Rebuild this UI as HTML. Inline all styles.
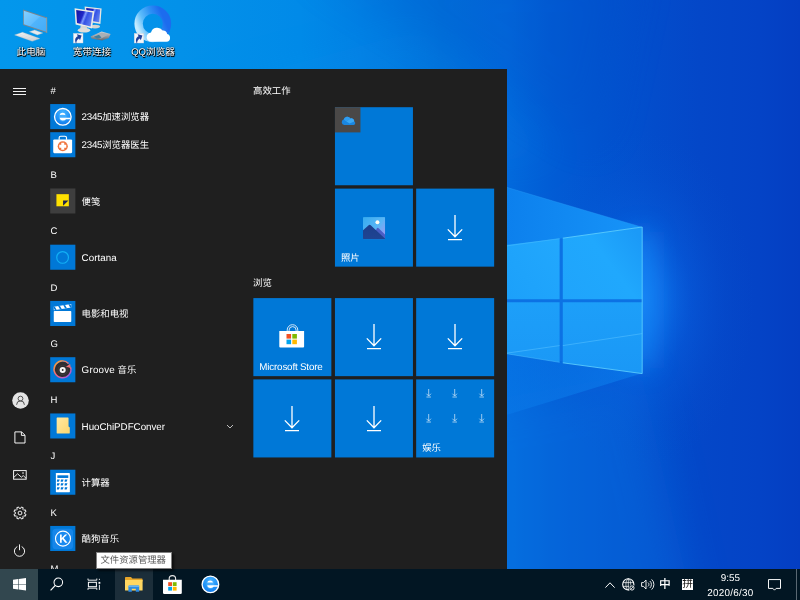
<!DOCTYPE html>
<html lang="zh-CN">
<head>
<meta charset="utf-8">
<title>桌面</title>
<style>
html,body{margin:0;padding:0;width:800px;height:600px;overflow:hidden;background:#0a5fd0;}
body{position:relative;text-rendering:geometricPrecision;font-family:"Liberation Sans","Noto Sans CJK SC",sans-serif;font-size:9.4px;color:#fff;}
.abs{position:absolute;}
#start,#taskbar,.dicon,#tip{will-change:transform;}
#wall{position:absolute;left:0;top:0;width:800px;height:600px;}
#start{position:absolute;left:0;top:69px;width:507px;height:500px;background:#1f1f1f;overflow:hidden;}
#taskbar{position:absolute;left:0;top:569px;width:800px;height:31px;background:#021623;overflow:hidden;}
.tile{position:absolute;width:78.2px;height:78.2px;}
.tlabel{position:absolute;left:6px;bottom:4.2px;font-size:9.4px;line-height:11px;white-space:nowrap;}
.hdr{position:absolute;left:50.6px;height:12px;margin-top:-6px;font-size:9.5px;line-height:12px;white-space:nowrap;color:#fff;}
.app{position:absolute;left:81.6px;height:12px;margin-top:-6px;font-size:9.4px;line-height:12px;white-space:nowrap;color:#fff;}
.ico{position:absolute;left:50.2px;width:25.2px;height:25px;}
.ico svg{position:absolute;left:0;top:0;width:100%;height:100%;display:block;}
.grp{position:absolute;left:253px;height:12px;margin-top:-6px;font-size:9.4px;line-height:12px;white-space:nowrap;}
.lt{position:relative;top:0px;font-size:9.8px;line-height:1px;}
.rail{position:absolute;left:9.75px;width:20px;height:20px;margin-top:-10px;}
.rail svg,.tb svg{display:block;width:100%;height:100%;}
.tb{position:absolute;}
.dicon{position:absolute;text-align:center;white-space:nowrap;font-size:9.6px;line-height:11px;color:#fff;text-shadow:0.7px 0.7px 0.8px #000,0 0 1.6px #000,0.4px 0.6px 0.4px #000;}
.dsvg{position:absolute;}
svg{overflow:visible;}
</style>
</head>
<body>

<svg id="wall" viewBox="0 0 800 600">
<defs>
<linearGradient id="wbase" x1="0" y1="0" x2="800" y2="0" gradientUnits="userSpaceOnUse">
<stop offset="0" stop-color="#0397ec"/>
<stop offset="0.225" stop-color="#0391e9"/>
<stop offset="0.375" stop-color="#018ae8"/>
<stop offset="0.45" stop-color="#0280e4"/>
<stop offset="0.55" stop-color="#0171db"/>
<stop offset="0.634" stop-color="#0369dc"/>
<stop offset="0.69" stop-color="#025cd5"/>
<stop offset="0.75" stop-color="#0254d0"/>
<stop offset="0.82" stop-color="#034ccb"/>
<stop offset="0.875" stop-color="#0447c8"/>
<stop offset="0.95" stop-color="#0443c6"/>
<stop offset="1" stop-color="#043ec2"/>
</linearGradient>
<radialGradient id="wglow" cx="640" cy="300" r="100" gradientUnits="userSpaceOnUse" gradientTransform="translate(640 300) scale(1.15 1.7) translate(-640 -300)">
<stop offset="0" stop-color="#1a90ff" stop-opacity="0.8"/>
<stop offset="0.2" stop-color="#1486fc" stop-opacity="0.62"/>
<stop offset="0.45" stop-color="#0c70ee" stop-opacity="0.32"/>
<stop offset="0.75" stop-color="#0a62de" stop-opacity="0.1"/>
<stop offset="1" stop-color="#0a5ad0" stop-opacity="0"/>
</radialGradient>
<linearGradient id="wpaneR" x1="562" y1="300" x2="642" y2="240" gradientUnits="userSpaceOnUse">
<stop offset="0" stop-color="#1fa4fb"/>
<stop offset="0.6" stop-color="#20a8fd"/>
<stop offset="1" stop-color="#1b9af7"/>
</linearGradient>
<linearGradient id="wpaneL" x1="480" y1="300" x2="560" y2="240" gradientUnits="userSpaceOnUse">
<stop offset="0" stop-color="#1a9ef9"/>
<stop offset="1" stop-color="#22a8fd"/>
</linearGradient>
<linearGradient id="wpaneR2" x1="0" y1="302" x2="0" y2="372" gradientUnits="userSpaceOnUse">
<stop offset="0" stop-color="#1d9ff9"/>
<stop offset="1" stop-color="#1a98f6"/>
</linearGradient>
<linearGradient id="wbeamT" x1="480" y1="0" x2="642" y2="0" gradientUnits="userSpaceOnUse">
<stop offset="0" stop-color="#0a7ceb"/>
<stop offset="1" stop-color="#1794f8"/>
</linearGradient>
<linearGradient id="wbeamB" x1="480" y1="0" x2="642" y2="0" gradientUnits="userSpaceOnUse">
<stop offset="0" stop-color="#0878e8"/>
<stop offset="1" stop-color="#0f86f2"/>
</linearGradient>
<filter id="wblur2" x="-300%" y="-50%" width="700%" height="200%"><feGaussianBlur stdDeviation="13"/></filter>
<filter id="wblur3" x="-30%" y="-30%" width="160%" height="160%"><feGaussianBlur stdDeviation="22"/></filter>
<filter id="wblur" x="-20%" y="-20%" width="140%" height="140%"><feGaussianBlur stdDeviation="10"/></filter>
</defs>
<rect width="800" height="600" fill="url(#wbase)"/>
<!-- soft light wedges -->
<polygon points="300,-40 640,-40 600,150" fill="#0048c0" opacity="0.16" filter="url(#wblur3)"/>
<polygon points="200,90 420,30 560,160 200,160" fill="#109cf0" opacity="0.10" filter="url(#wblur3)"/>
<polygon points="641,373 700,640 380,640 380,420" fill="#0a80ea" opacity="0.28" filter="url(#wblur3)"/>
<rect width="800" height="600" fill="url(#wglow)" opacity="0.85"/>
<rect x="630" y="232" width="22" height="136" fill="#1e96ff" opacity="0.6" filter="url(#wblur2)"/>
<!-- beams -->
<polygon points="641.5,227 480,179.5 480,252" fill="url(#wbeamT)"/>
<polygon points="641.5,373.6 480,423 480,350" fill="url(#wbeamB)" opacity="0.5"/>
<line x1="641.5" y1="227" x2="480" y2="179.5" stroke="#2aa0f8" stroke-width="0.6" opacity="0.6"/>
<!-- cross bars -->
<polygon points="480,250 642.2,227 642.2,373.6 480,350" fill="#0c72e4"/>
<!-- logo panes -->
<polygon points="562.8,238.2 642.2,227 642.2,299.2 562.8,299.2" fill="url(#wpaneR)"/>
<polygon points="480,248 559.6,238.6 559.6,299.2 480,299.2" fill="url(#wpaneL)"/>
<polygon points="562.8,302.2 642.2,302.2 642.2,373.6 562.8,362.8" fill="url(#wpaneR2)"/>
<polygon points="480,302.2 559.6,302.2 559.6,362.3 480,349.4" fill="url(#wpaneR2)"/>
<path d="M562.8 345.6 L642.2 333.6 M480 357 L559.6 345.6" stroke="#4fbcff" stroke-width="0.9" opacity="0.7"/>
<polyline points="562.8,238.2 642.2,227 642.2,373.6 562.8,362.8" fill="none" stroke="#62d4ff" stroke-width="0.9" opacity="0.9"/>
<path d="M480 249.6 L559.6 238.6 M480 349.4 L559.6 362.3" stroke="#4fc0ff" stroke-width="0.7" opacity="0.7"/>
</svg>

<!-- DESKTOP ICONS -->
<svg class="dsvg" style="left:12px;top:6px;width:40px;height:38px" viewBox="12 6 40 38">
<defs><linearGradient id="gpc" x1="0" y1="0" x2="1" y2="1"><stop offset="0" stop-color="#86d0ff"/><stop offset="0.48" stop-color="#62beff"/><stop offset="0.52" stop-color="#50b4fb"/><stop offset="1" stop-color="#43acf8"/></linearGradient>
<linearGradient id="gkb" x1="0" y1="0" x2="0.3" y2="1"><stop offset="0" stop-color="#fafafa"/><stop offset="1" stop-color="#cfd4d9"/></linearGradient></defs>
<path d="M29.4 31.7 L34.6 30 L42.8 33 L37.4 34.9 Z" fill="#e6e9ec" stroke="#b4bac0" stroke-width="0.35"/>
<path d="M23.1 9.5 L47.100 17.500 V32.900 L23.100 24.900 Z" fill="#7d848b"/>
<path d="M46.300 17.800 L47.100 17.500 V32.900 L46.300 32.300 Z" fill="#a89f94"/>
<path d="M23.800 10.700 L46.300 18.200 V31.700 L23.800 24.200 Z" fill="url(#gpc)"/>
<path d="M14.600 34.900 L22.500 32.300 L39.800 38.600 L32.200 41.300 Z" fill="url(#gkb)" stroke="#b4bac0" stroke-width="0.35"/>
<path d="M17.2 34.900 L33.400 40.800 M19.800 34 L36 39.900 M22.400 33.200 L38.400 39" stroke="#c2c7cc" stroke-width="0.3" fill="none"/>
</svg>
<div class="dicon" style="left:1px;top:47.3px;width:60px">此电脑</div>
<svg class="dsvg" style="left:72px;top:5px;width:40px;height:40px" viewBox="72 5 40 40">
<defs><linearGradient id="gmon" x1="0" y1="0.2" x2="1" y2="0.6"><stop offset="0" stop-color="#1516a4"/><stop offset="0.38" stop-color="#2029c8"/><stop offset="0.5" stop-color="#7f9cff"/><stop offset="0.62" stop-color="#3552e4"/><stop offset="1" stop-color="#5f80f2"/></linearGradient>
<linearGradient id="gmdm" x1="0" y1="0" x2="0" y2="1"><stop offset="0" stop-color="#d4d8dc"/><stop offset="1" stop-color="#5e666e"/></linearGradient></defs>
<path d="M84.6 6.6 L101.6 8.6 L100.4 24 L86 21.6 Z" fill="#e6e6e2"/>
<path d="M86.2 8 L100.2 9.6 L99.2 22.2 L87.2 20.2 Z" fill="url(#gmon)"/>
<ellipse cx="95" cy="26.6" rx="5" ry="1.8" fill="#d4d4d0"/>
<path d="M74.6 8.2 L94.4 11.2 L92 28.6 L75.6 24.4 Z" fill="#ecece8"/>
<path d="M76.2 10 L92.6 12.6 L90.6 26.4 L77 23 Z" fill="url(#gmon)"/>
<path d="M80.6 26 h6 l0.6 3 h-7 z" fill="#d8d8d4"/>
<ellipse cx="84" cy="30.2" rx="6.2" ry="2.4" fill="#dededa"/>
<path d="M90.6 36.6 L101.6 31.4 L110.6 34 L108.8 38 L102 40.6 L91.6 38.6 Z" fill="url(#gmdm)"/>
<path d="M92.4 36.4 L101.6 32.4 L108.6 34.6 L101 38.6 Z" fill="#a9b0b6"/>
<path d="M93.6 36.8 L99 34.8 L101.6 37.8 L97 38.4 Z" fill="#3f7f9e"/>
<rect x="73.4" y="33.4" width="9.6" height="9.6" fill="#f4f6fa" stroke="#c8ccd4" stroke-width="0.4"/>
<path d="M75.6 41.6 c0 -3.4 1.4 -4.8 3.8 -4.8 v-1.6 l2.8 2.6 l-2.8 2.6 v-1.6 c-1.8 0 -3 0.8 -3.8 2.8 z" fill="#1f3f9a" transform="translate(78.2 38.3) rotate(-28) scale(1.3) translate(-78.9 -38.4)"/>
</svg>
<div class="dicon" style="left:62px;top:47.3px;width:60px">宽带连接</div>
<svg class="dsvg" style="left:132px;top:4px;width:42px;height:42px" viewBox="132 4 42 42">
<defs><linearGradient id="gqq" x1="0.05" y1="0.85" x2="0.95" y2="0.45"><stop offset="0" stop-color="#c4ebff"/><stop offset="0.3" stop-color="#5cbcfb"/><stop offset="0.65" stop-color="#2d92f5"/><stop offset="1" stop-color="#1c6cee"/></linearGradient></defs>
<circle cx="152.8" cy="23.8" r="14.2" fill="none" stroke="url(#gqq)" stroke-width="8.4"/>
<path d="M151.4 41.8 a4.6 4.6 0 0 1 -0.4 -9.2 a6.4 6.4 0 0 1 11.6 -2 a4 4 0 0 1 4.600 3.4 a4 4 0 0 1 -0.600 7.8 z" fill="#fff"/>
<rect x="134.200" y="33.400" width="9.600" height="9.600" fill="#f4f6fa" stroke="#c8ccd4" stroke-width="0.4"/>
<path d="M136.4 41.6 c0 -3.4 1.4 -4.8 3.8 -4.8 v-1.6 l2.8 2.6 l-2.8 2.6 v-1.6 c-1.8 0 -3 0.8 -3.8 2.8 z" fill="#1f3f9a" transform="translate(139 38.3) rotate(-28) scale(1.3) translate(-139.7 -38.4)"/>
</svg>
<div class="dicon" style="left:123px;top:47.3px;width:60px">QQ浏览器</div>
<!-- START MENU -->
<div id="start">
<svg class="abs" style="left:0;top:0;width:507px;height:500px" viewBox="0 0 507 500"><rect x="50.2" y="35.07" width="25.15" height="25.05" fill="#0078d7"/><rect x="50.2" y="63.20" width="25.15" height="25.05" fill="#0078d7"/><rect x="50.2" y="119.45" width="25.15" height="25.05" fill="#3e3e3e"/><rect x="50.2" y="175.70" width="25.15" height="25.05" fill="#0078d7"/><rect x="50.2" y="231.95" width="25.15" height="25.05" fill="#0078d7"/><rect x="50.2" y="288.20" width="25.15" height="25.05" fill="#0078d7"/><rect x="50.2" y="344.45" width="25.15" height="25.05" fill="#0078d7"/><rect x="50.2" y="400.70" width="25.15" height="25.05" fill="#0078d7"/><rect x="50.2" y="456.95" width="25.15" height="25.05" fill="#0078d7"/><rect x="334.95" y="38.20" width="78.0" height="78.05" fill="#0078d7"/><rect x="334.95" y="38.20" width="25.5" height="25.2" fill="#4a4847"/><rect x="334.95" y="119.60" width="78.0" height="78.05" fill="#0078d7"/><rect x="416.15" y="119.60" width="78.0" height="78.05" fill="#0078d7"/><rect x="253.35" y="229.10" width="78.0" height="78.05" fill="#0078d7"/><rect x="334.95" y="229.10" width="78.0" height="78.05" fill="#0078d7"/><rect x="416.15" y="229.10" width="78.0" height="78.05" fill="#0078d7"/><rect x="253.35" y="310.40" width="78.0" height="78.05" fill="#0078d7"/><rect x="334.95" y="310.40" width="78.0" height="78.05" fill="#0078d7"/><rect x="416.15" y="310.40" width="78.0" height="78.05" fill="#0078d7"/></svg>
<div class="hdr" style="top:23px">#</div>
<div class="ico" style="top:34.97px"><svg viewBox="0 0 32 32"><defs><radialGradient id="g2345" cx="0.5" cy="0.25" r="0.85"><stop offset="0" stop-color="#46b2ff"/><stop offset="0.55" stop-color="#1f92f7"/><stop offset="1" stop-color="#0f72e6"/></radialGradient></defs>
<circle cx="16.3" cy="16.400" r="10.600" fill="url(#g2345)" stroke="#fff" stroke-width="1.7"/>
<ellipse cx="16.2" cy="16.600" rx="5" ry="5.800" fill="#52b4ff" opacity="0.55"/>
<path d="M12.300 14.100 Q12.800 11.300 16 11.300 Q19.200 11.300 19.700 14.100 Q16 13.700 12.300 14.100 Z" fill="#fff"/>
<path d="M12.300 17.500 H25.900 V19.400 H20.400 Q19 21 16 21 Q12.800 21 12.300 17.500 Z" fill="#fff"/></svg></div>
<div class="app" style="top:48px"><span class="lt" style="letter-spacing:-0.3px">2345</span>加速浏览器</div>
<div class="ico" style="top:63.10px"><svg viewBox="0 0 32 32"><path d="M11.6 10 v-2.6 a2 2 0 0 1 2 -2 h5.4 a2 2 0 0 1 2 2 v2.6" fill="none" stroke="#fff" stroke-width="1.5"/>
<rect x="4" y="9.5" width="24.2" height="17.6" rx="1.4" fill="#fff"/>
<circle cx="16.2" cy="18.2" r="6.5" fill="#f0733c"/>
<path d="M14.3 13.7 h3.8 v2.6 h2.6 v3.8 h-2.6 v2.6 h-3.8 v-2.6 h-2.6 v-3.8 h2.6 z" fill="#fff"/></svg></div>
<div class="app" style="top:76px"><span class="lt" style="letter-spacing:-0.3px">2345</span>浏览器医生</div>
<div class="hdr" style="top:107px">B</div>
<div class="ico" style="top:119.35px"><svg viewBox="0 0 32 32"><rect x="8.1" y="7.9" width="15.9" height="15.5" fill="#ffe100"/><path d="M16.6 16 h6.9 l-6.9 6.8 z" fill="#1c2452"/></svg></div>
<div class="app" style="top:133px">便笺</div>
<div class="hdr" style="top:163px">C</div>
<div class="ico" style="top:175.60px"><svg viewBox="0 0 32 32"><circle cx="16" cy="15.9" r="7.5" fill="none" stroke="#12b0f5" stroke-width="1.5"/></svg></div>
<div class="app" style="top:189px"><span class="lt" style="letter-spacing:0.03px">Cortana</span></div>
<div class="hdr" style="top:220px">D</div>
<div class="ico" style="top:231.85px"><svg viewBox="0 -0.5 32 32"><defs><clipPath id="cmov"><path d="M4.7 6.7 L27.1 3.3 V7.9 L4.7 11.2 Z"/></clipPath></defs>
<path d="M4.7 6.7 L27.1 3.3 V7.9 L4.7 11.2 Z" fill="#fff"/>
<g clip-path="url(#cmov)" fill="#0078d7"><path d="M2.600 5 h2.400 l4.400 7.600 h-2.400 z M9.200 4 h2.400 l4.400 7.600 h-2.400 z M15.800 3 h2.400 l4.400 7.600 h-2.400 z M22.400 2 h2.400 l4.400 7.600 h-2.400 z"/></g>
<rect x="4.700" y="12.300" width="22.400" height="14.200" rx="1" fill="#fff"/></svg></div>
<div class="app" style="top:245px">电影和电视</div>
<div class="hdr" style="top:276px">G</div>
<div class="ico" style="top:288.10px"><svg viewBox="0 0 32 32"><defs><linearGradient id="ggrv" x1="0.15" y1="0.1" x2="0.85" y2="0.95"><stop offset="0" stop-color="#ff9838"/><stop offset="0.5" stop-color="#ee6680"/><stop offset="1" stop-color="#a45ae0"/></linearGradient></defs>
<circle cx="16.1" cy="16.6" r="10.4" fill="#2f2d30"/>
<path d="M23.600 8.200 A10.800 10.800 0 1 0 26.400 13.200" fill="none" stroke="url(#ggrv)" stroke-width="1.9"/>
<path d="M20.200 12.600 L25.600 8.800 L26.800 15.200 L24.400 13.400 Z" fill="#ee6e78"/>
<circle cx="16.1" cy="16.600" r="6" fill="none" stroke="#3d3b3e" stroke-width="1.200"/>
<circle cx="16.1" cy="16.600" r="3.900" fill="#f6f6f6"/><circle cx="16.1" cy="16.600" r="1.200" fill="#2f2d30"/></svg></div>
<div class="app" style="top:301px"><span class="lt" style="letter-spacing:0.2px">Groove</span> 音乐</div>
<div class="hdr" style="top:332px">H</div>
<div class="ico" style="top:344.35px"><svg viewBox="0 0 32 32"><defs><linearGradient id="gfld" x1="0" y1="0" x2="1" y2="1"><stop offset="0" stop-color="#ffe9a2"/><stop offset="1" stop-color="#fbd66e"/></linearGradient></defs>
<path d="M9 5.800 h14 a0.600 0.600 0 0 1 0.600 0.600 v10.800 l1.600 1.300 v7.200 a0.600 0.600 0 0 1 -0.600 0.600 h-15.600 a0.600 0.600 0 0 1 -0.600 -0.600 v-19.300 a0.600 0.600 0 0 1 0.600 -0.600 z" fill="url(#gfld)"/></svg></div>
<div class="app" style="top:358px"><span class="lt" style="letter-spacing:-0.03px">HuoChiPDFConver</span></div>
<div class="hdr" style="top:388px">J</div>
<div class="ico" style="top:400.60px"><svg viewBox="0 0 32 32"><rect x="7.400" y="3.900" width="17.900" height="24.600" rx="0.600" fill="#fff"/><rect x="9.300" y="6.800" width="14" height="3.400" fill="#0078d7"/><path d="M9.0 12.2 h3.4 l-1.200 2.800 h-2.600 z" fill="#0078d7"/><path d="M9.0 17.1 h3.4 l-1.200 2.800 h-2.600 z" fill="#0078d7"/><path d="M9.0 22.1 h3.4 l-1.200 2.800 h-2.600 z" fill="#0078d7"/><path d="M13.9 12.2 h3.4 l-1.200 2.800 h-2.600 z" fill="#0078d7"/><path d="M13.9 17.1 h3.4 l-1.200 2.800 h-2.600 z" fill="#0078d7"/><path d="M13.9 22.1 h3.4 l-1.200 2.800 h-2.600 z" fill="#0078d7"/><path d="M18.9 12.2 h3.4 l-1.200 2.800 h-2.600 z" fill="#0078d7"/><path d="M18.9 17.1 h3.4 l-1.200 2.800 h-2.600 z" fill="#0078d7"/><path d="M18.9 22.1 h3.4 l-1.200 2.800 h-2.600 z" fill="#0078d7"/></svg></div>
<div class="app" style="top:414px">计算器</div>
<div class="hdr" style="top:445px">K</div>
<div class="ico" style="top:456.85px"><svg viewBox="0 0 32 32"><rect x="3" y="3.400" width="26.400" height="26.400" rx="4.500" fill="#1686ea"/><circle cx="16.5" cy="16.2" r="9.6" fill="#1a8af0" stroke="#fff" stroke-width="1.4"/>
<path d="M12.700 11 h2.200 v4.200 l4.200 -4.200 h2.900 l-4.600 4.500 l4.900 5.900 h-2.900 l-3.600 -4.400 l-0.900 0.900 v3.500 h-2.200 z" fill="#fff"/></svg></div>
<div class="app" style="top:470px">酷狗音乐</div>
<div class="hdr" style="top:501px">M</div>
<svg class="abs" style="left:225.5px;top:355.00px;width:8px;height:5px" viewBox="0 0 8 5"><path d="M1 1 L4 4 L7 1" fill="none" stroke="#d0d0d0" stroke-width="0.9"/></svg>
<div class="abs" style="left:13.4px;top:19.00px;width:12.8px;height:1px;background:#f2f2f2"></div>
<div class="abs" style="left:13.4px;top:22.00px;width:12.8px;height:1px;background:#f2f2f2"></div>
<div class="abs" style="left:13.4px;top:25.00px;width:12.8px;height:1px;background:#f2f2f2"></div>
<svg class="abs" style="left:11.6px;top:322.80px;width:17px;height:17px" viewBox="0 0 17 17"><circle cx="8.5" cy="8.5" r="8.3" fill="#e4e4e4"/><circle cx="8.5" cy="6.6" r="2.4" fill="none" stroke="#444" stroke-width="0.9"/><path d="M4.6 12.8 a3.9 3.9 0 0 1 7.8 0" fill="none" stroke="#444" stroke-width="0.9"/></svg>
<svg class="abs" style="left:13.6px;top:362.20px;width:12px;height:13px" viewBox="0 0 12 13"><path d="M0.9 0.9 H7.6 L11 4.2 V12 H0.9 Z M7.4 1 V4.4 H10.9" fill="none" stroke="#fff" stroke-width="0.95"/></svg>
<svg class="abs" style="left:13px;top:401.40px;width:14px;height:10px" viewBox="0 0 14 10"><rect x="0.6" y="0.6" width="12.6" height="8.6" fill="none" stroke="#fff" stroke-width="0.95"/><path d="M0.8 7.4 L4.6 3.8 L8.4 7.2 L10.2 5.6 L13 8.2" fill="none" stroke="#fff" stroke-width="0.9"/><circle cx="10" cy="3" r="0.8" fill="#fff"/></svg>
<svg class="abs" style="left:12.8px;top:436.80px;width:14px;height:14px" viewBox="0 0 14 14"><path d="M13.03 8.45 L12.29 10.24 L10.80 9.76 L9.76 10.80 L10.24 12.29 L8.45 13.03 L7.74 11.64 L6.26 11.64 L5.55 13.03 L3.76 12.29 L4.24 10.80 L3.20 9.76 L1.71 10.24 L0.97 8.45 L2.36 7.74 L2.36 6.26 L0.97 5.55 L1.71 3.76 L3.20 4.24 L4.24 3.20 L3.76 1.71 L5.55 0.97 L6.26 2.36 L7.74 2.36 L8.45 0.97 L10.24 1.71 L9.76 3.20 L10.80 4.24 L12.29 3.76 L13.03 5.55 L11.64 6.26 L11.64 7.74 Z" fill="none" stroke="#fff" stroke-width="0.95" stroke-linejoin="round"/><circle cx="7" cy="7" r="1.9" fill="none" stroke="#fff" stroke-width="0.9"/></svg>
<svg class="abs" style="left:13.3px;top:475.20px;width:13px;height:13px" viewBox="0 0 13 13"><path d="M4.3 2.6 A5.1 5.1 0 1 0 8.7 2.6" fill="none" stroke="#fff" stroke-width="0.95"/><path d="M6.5 0.4 V6.2" stroke="#fff" stroke-width="0.95"/></svg>
<div class="grp" style="top:22.40px">高效工作</div>
<div class="grp" style="top:214.20px">浏览</div>
<div class="tile" style="left:334.95px;top:38.20px"><svg class="abs" style="left:6.1px;top:9.1px;width:14px;height:9.2px" viewBox="0 0 26 17"><path d="M6 16.5 a5 5 0 0 1 -1 -9.8 a7 7 0 0 1 12.6 -2.2 a5.6 5.6 0 0 1 7 5.6 a3.4 3.4 0 0 1 -1 6.4 z" fill="#1a86e0"/><path d="M5 6.7 a7 7 0 0 1 12.6 -2.2 l-7.6 5.5 z" fill="#2f9cf0"/><path d="M10 10 l7.6 -5.5 a5.6 5.6 0 0 1 7 5.6 l-8.6 4 z" fill="#3aa8f5"/></svg></div>
<div class="tile" style="left:334.95px;top:119.60px"><svg class="abs" style="left:28px;top:28.3px;width:22.2px;height:22.4px" viewBox="0 0 24 24"><defs><linearGradient id="gph" x1="0" y1="0" x2="1" y2="0.8"><stop offset="0" stop-color="#36acf0"/><stop offset="0.6" stop-color="#58b6f6"/><stop offset="1" stop-color="#9c98f2"/></linearGradient><linearGradient id="gph2" x1="0" y1="0" x2="0" y2="1"><stop offset="0" stop-color="#1c3f8c"/><stop offset="1" stop-color="#1f4492"/></linearGradient><clipPath id="cph"><rect x="0" y="0" width="24" height="24" rx="0.8"/></clipPath></defs><g clip-path="url(#cph)"><rect width="24" height="24" fill="url(#gph)"/><path d="M11 24 L14.600 12.600 Q15.800 10.800 17.200 12.200 L24 19 V24 Z" fill="#4a5ec6"/><path d="M0 14.200 L5.800 9 Q7.200 7.800 8.600 9 L24 23.400 V24 H0 Z" fill="url(#gph2)"/><circle cx="15.6" cy="5.600" r="2.100" fill="#fffdf2"/></g></svg><div class="tlabel">照片</div></div>
<div class="tile" style="left:416.15px;top:119.60px"><svg class="abs" style="left:30.6px;top:26.3px;width:16px;height:26px" viewBox="0 0 16 26"><path d="M8 0 V21.6 M0.8 14.4 L8 21.8 L15.2 14.4 M1 24.6 H15" fill="none" stroke="#fff" stroke-width="1.3"/></svg></div>
<div class="tile" style="left:253.35px;top:229.10px"><svg class="abs" style="left:0;top:0;width:78px;height:78px" viewBox="0 0 78 78"><path d="M34.200 33.400 v-1.400 a5.300 5.300 0 0 1 10.600 0 v1.400 M36.100 33.400 v-1.300 a3.500 3.500 0 0 1 7 0 v1.300" fill="none" stroke="#e8f2fb" stroke-width="0.9"/><path d="M26.300 32.900 h24.800 v15.700 a1 1 0 0 1 -1 1 h-22.800 a1 1 0 0 1 -1 -1 z" fill="#fff"/><rect x="33.500" y="36" width="4.600" height="4.600" fill="#f25022"/><rect x="39.300" y="36" width="4.600" height="4.600" fill="#7fba00"/><rect x="33.500" y="41.600" width="4.600" height="4.600" fill="#00a4ef"/><rect x="39.300" y="41.600" width="4.600" height="4.600" fill="#ffb900"/></svg><div class="tlabel"><span class="lt" style="letter-spacing:-0.18px">Microsoft Store</span></div></div>
<div class="tile" style="left:334.95px;top:229.10px"><svg class="abs" style="left:30.6px;top:26.3px;width:16px;height:26px" viewBox="0 0 16 26"><path d="M8 0 V21.6 M0.8 14.4 L8 21.8 L15.2 14.4 M1 24.6 H15" fill="none" stroke="#fff" stroke-width="1.3"/></svg></div>
<div class="tile" style="left:416.15px;top:229.10px"><svg class="abs" style="left:30.6px;top:26.3px;width:16px;height:26px" viewBox="0 0 16 26"><path d="M8 0 V21.6 M0.8 14.4 L8 21.8 L15.2 14.4 M1 24.6 H15" fill="none" stroke="#fff" stroke-width="1.3"/></svg></div>
<div class="tile" style="left:253.35px;top:310.40px"><svg class="abs" style="left:30.6px;top:26.3px;width:16px;height:26px" viewBox="0 0 16 26"><path d="M8 0 V21.6 M0.8 14.4 L8 21.8 L15.2 14.4 M1 24.6 H15" fill="none" stroke="#fff" stroke-width="1.3"/></svg></div>
<div class="tile" style="left:334.95px;top:310.40px"><svg class="abs" style="left:30.6px;top:26.3px;width:16px;height:26px" viewBox="0 0 16 26"><path d="M8 0 V21.6 M0.8 14.4 L8 21.8 L15.2 14.4 M1 24.6 H15" fill="none" stroke="#fff" stroke-width="1.3"/></svg></div>
<div class="tile" style="left:416.15px;top:310.40px"><svg class="abs" style="left:9.9px;top:10.0px;width:5.4px;height:8.4px;opacity:0.72" viewBox="0 0 16 26"><path d="M8 0 V21.6 M1 14.6 L8 21.8 L15 14.6 M1 24.8 H15" fill="none" stroke="#fff" stroke-width="2.6"/></svg><svg class="abs" style="left:9.9px;top:35.0px;width:5.4px;height:8.4px;opacity:0.72" viewBox="0 0 16 26"><path d="M8 0 V21.6 M1 14.6 L8 21.8 L15 14.6 M1 24.8 H15" fill="none" stroke="#fff" stroke-width="2.6"/></svg><svg class="abs" style="left:35.9px;top:10.0px;width:5.4px;height:8.4px;opacity:0.72" viewBox="0 0 16 26"><path d="M8 0 V21.6 M1 14.6 L8 21.8 L15 14.6 M1 24.8 H15" fill="none" stroke="#fff" stroke-width="2.6"/></svg><svg class="abs" style="left:35.9px;top:35.0px;width:5.4px;height:8.4px;opacity:0.72" viewBox="0 0 16 26"><path d="M8 0 V21.6 M1 14.6 L8 21.8 L15 14.6 M1 24.8 H15" fill="none" stroke="#fff" stroke-width="2.6"/></svg><svg class="abs" style="left:62.5px;top:10.0px;width:5.4px;height:8.4px;opacity:0.72" viewBox="0 0 16 26"><path d="M8 0 V21.6 M1 14.6 L8 21.8 L15 14.6 M1 24.8 H15" fill="none" stroke="#fff" stroke-width="2.6"/></svg><svg class="abs" style="left:62.5px;top:35.0px;width:5.4px;height:8.4px;opacity:0.72" viewBox="0 0 16 26"><path d="M8 0 V21.6 M1 14.6 L8 21.8 L15 14.6 M1 24.8 H15" fill="none" stroke="#fff" stroke-width="2.6"/></svg><div class="tlabel">娱乐</div></div>
</div>
<!-- TASKBAR -->
<div id="taskbar">
<div class="abs" style="left:0;top:0;width:38.1px;height:31.25px;background:#32474f"></div>
<div class="abs" style="left:115.2px;top:0;width:37.6px;height:31.25px;background:#1c2e3a"></div>
<svg class="abs" style="left:12.9px;top:9.10px;width:13px;height:12.6px" viewBox="0 0 134 128"><path d="M0 18 L54 10.5 V61 H0 Z M60 9.6 L134 0 V61 H60 Z M0 67 H54 V117.5 L0 110 Z M60 67 H134 V128 L60 118.4 Z" fill="#fff"/></svg>
<svg class="abs" style="left:49.6px;top:8.40px;width:14px;height:14px" viewBox="0 0 14 14"><circle cx="8.3" cy="5.3" r="4.3" fill="none" stroke="#fff" stroke-width="1.05"/><path d="M5.3 8.4 L0.6 13.3" stroke="#fff" stroke-width="1.15"/></svg>
<svg class="abs" style="left:87px;top:9.00px;width:14px;height:13px" viewBox="0 0 14 13"><g fill="none" stroke="#fff" stroke-width="0.9"><path d="M1 0.500 V2.200 H9.800 V0.500"/><rect x="1.400" y="4.300" width="8" height="4.400" stroke-width="1"/><path d="M1 11.900 V10.200 H9.800 V11.900"/><path d="M12.400 0.800 V2 M12.400 6.800 V11.900"/></g><rect x="11.500" y="3.900" width="1.800" height="1.900" fill="#fff"/></svg>
<svg class="abs" style="left:124.9px;top:8.20px;width:17.6px;height:14.8px" viewBox="0 0 176 148"><path d="M0 8 a8 8 0 0 1 8 -8 h52 l14 16 h94 a8 8 0 0 1 8 8 v20 h-176 z" fill="#e6a52a"/><path d="M0 30 h176 v100 a6 6 0 0 1 -6 6 h-164 a6 6 0 0 1 -6 -6 z" fill="#ffd761"/><path d="M34 148 v-54 a8 8 0 0 1 8 -8 h92 a8 8 0 0 1 8 8 v54 h-34 v-30 h-40 v30 z" fill="#2d8be2"/><path d="M34 100 h108 v-6 a8 8 0 0 0 -8 -8 h-92 a8 8 0 0 0 -8 8z" fill="#63b4f2"/></svg>
<svg class="abs" style="left:162.6px;top:5.90px;width:18.8px;height:19px" viewBox="0 0 188 190"><path d="M62 50 v-14 a32 30 0 0 1 64 0 v14" fill="none" stroke="#e8e8e8" stroke-width="11"/><path d="M0 48 h188 v130 a12 12 0 0 1 -12 12 h-164 a12 12 0 0 1 -12 -12 z" fill="#fff"/><rect x="52" y="72" width="38" height="38" fill="#f25022"/><rect x="98" y="72" width="38" height="38" fill="#7fba00"/><rect x="52" y="118" width="38" height="38" fill="#00a4ef"/><rect x="98" y="118" width="38" height="38" fill="#ffb900"/></svg>
<svg class="abs" style="left:201.100px;top:6.40px;width:18.800px;height:18.800px" viewBox="4.300 4.400 24 24"><defs><radialGradient id="g2345b" cx="0.5" cy="0.25" r="0.85"><stop offset="0" stop-color="#46b2ff"/><stop offset="0.55" stop-color="#1f92f7"/><stop offset="1" stop-color="#0f72e6"/></radialGradient></defs><circle cx="16.3" cy="16.400" r="10.600" fill="url(#g2345b)" stroke="#fff" stroke-width="1.7"/><ellipse cx="16.2" cy="16.600" rx="5" ry="5.800" fill="#52b4ff" opacity="0.55"/><path d="M12.300 14.100 Q12.800 11.300 16 11.300 Q19.200 11.300 19.700 14.100 Q16 13.700 12.300 14.100 Z" fill="#fff"/><path d="M12.300 17.500 H25.900 V19.400 H20.400 Q19 21 16 21 Q12.800 21 12.300 17.500 Z" fill="#fff"/></svg>
<svg class="abs" style="left:604.8px;top:12.60px;width:10px;height:6px" viewBox="0 0 10 6"><path d="M0.4 5.6 L5 0.8 L9.6 5.6" fill="none" stroke="#fff" stroke-width="1"/></svg>
<svg class="abs" style="left:622px;top:9.00px;width:13.4px;height:13.4px" viewBox="0 0 134 134"><g fill="none" stroke="#fff"><circle cx="63" cy="64" r="56" stroke-width="11"/><ellipse cx="63" cy="64" rx="24" ry="56" stroke-width="7"/><path d="M63 8 V120 M10 46 H116 M10 84 H116" stroke-width="7"/></g><circle cx="100" cy="100" r="31" fill="#021623"/><circle cx="100" cy="100" r="21" fill="none" stroke="#fff" stroke-width="9"/><path d="M86 114 L114 86" stroke="#fff" stroke-width="8"/></svg>
<svg class="abs" style="left:640.8px;top:9.90px;width:14px;height:11px" viewBox="0 0 140 110"><path d="M6 36 H26 L50 10 V100 L26 74 H6 Z" fill="none" stroke="#fff" stroke-width="9" stroke-linejoin="round"/><path d="M70 36 a24 24 0 0 1 0 38 M88 20 a46 46 0 0 1 0 70 M106 4 a68 68 0 0 1 0 102" fill="none" stroke="#fff" stroke-width="9"/></svg>
<div class="abs" style="left:659px;top:9.30px;width:12px;height:13px;font-size:11.8px;line-height:13px;text-align:center;font-weight:500;color:#fff;font-family:'Liberation Sans','Noto Sans CJK SC',sans-serif">中</div>
<div class="abs" style="left:682px;top:10.00px;width:11.1px;height:10.7px;background:#fff;color:#1a1a1a;font-size:10.8px;line-height:10.2px;text-align:center;font-weight:400;font-family:'Liberation Sans','Noto Sans CJK SC',sans-serif;overflow:hidden">拼</div>
<div class="abs" style="left:700px;top:4.00px;width:60.8px;height:11px;font-size:9.9px;line-height:11px;text-align:center;color:#fff">9:55</div>
<div class="abs" style="left:700px;top:18.70px;width:60.8px;height:11px;font-size:9.9px;line-height:11px;text-align:center;color:#fff;letter-spacing:0.27px">2020/6/30</div>
<svg class="abs" style="left:767.8px;top:9.50px;width:13px;height:12.8px" viewBox="0 0 134 130"><path d="M5 5 H129 V96 H84 L67 114 L50 96 H5 Z" fill="none" stroke="#fff" stroke-width="10" stroke-linejoin="miter"/></svg>
<div class="abs" style="left:796.2px;top:0;width:0.9px;height:31.25px;background:#5a6872"></div>
</div>
<div class="abs" id="tip" style="left:96.3px;top:552.05px;width:75.6px;height:16.7px;box-sizing:border-box;background:#fff;border:0.6px solid #808080;box-shadow:1.6px 1.6px 2px rgba(0,0,0,0.55);color:#5c5c5c;font-size:9.35px;line-height:15.4px;text-align:left;padding-left:3.5px;white-space:nowrap">文件资源管理器</div>
</body>
</html>
